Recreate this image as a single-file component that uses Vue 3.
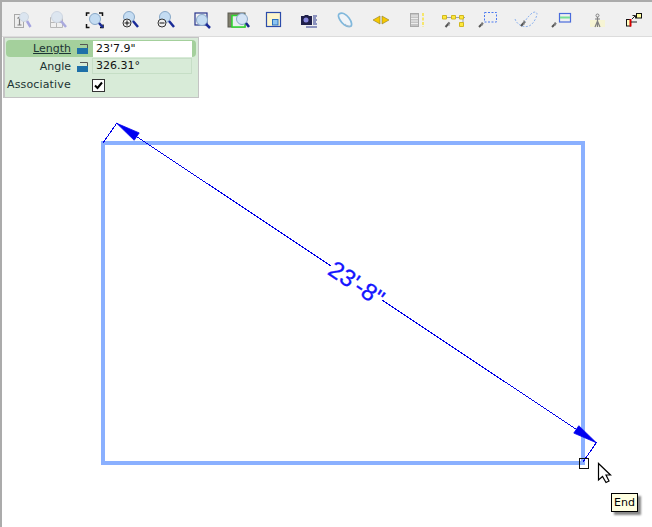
<script setup>
const slots = Array.from({ length: 18 }, (_, i) => i)
</script>

<template>
  <div class="window">
    <div class="toolbar">
      <div class="tool" v-for="i in slots" :key="i">
        <svg width="24" height="24" viewBox="0 0 24 24">
          <template v-if="i === 0">
            <rect x="4.500" y="7.500" width="9" height="13" fill="#eee" stroke="#a8a8a8" />
            <path d="M9.500 10v8M7.500 18h4M7.500 11.500l2-1.500" fill="none" stroke="#808080" stroke-width="1.200" />
            <circle cx="14" cy="10" r="4.500" fill="#dbe5f0" stroke="#cdd6e0" />
            <path d="M17 14l3.500 6" stroke="#a4a4e0" stroke-width="2.500" />
          </template>
          <template v-else-if="i === 1">
            <path d="M4.500 10.500v10h12v-10zM4.500 15.500h12M10.500 10.500v10" fill="none" stroke="#b8b8b8" />
            <circle cx="11" cy="10" r="5.500" fill="#dde6f0" stroke="#ced6e2" />
            <path d="M15 14l5 6" stroke="#aaaade" stroke-width="2.500" />
          </template>
          <template v-else-if="i === 2">
            <path d="M4.500 9v-3h3M17 6h3.500v3M4.500 17v3.500h3M21 17.500v3h-3" fill="none" stroke="#111" stroke-width="1.500" />
            <circle cx="13" cy="12" r="5.500" fill="#c4dcf2" stroke="#88a8c8" />
            <path d="M17 16l4 4.500" stroke="#1a2c98" stroke-width="2.500" />
          </template>
          <template v-else-if="i === 3 || i === 4">
            <circle cx="11" cy="10" r="5.500" fill="#c4dcf2" stroke="#88a8c8" />
            <path d="M15 14l5 6" stroke="#1a2c98" stroke-width="2.500" />
            <circle :cx="i === 3 ? 9 : 8" cy="16" r="4" fill="#eee" stroke="#333" />
            <path v-if="i === 3" d="M6.500 16h5M9 13.500v5" stroke="#111" />
            <path v-else d="M5.500 16h5" stroke="#111" />
          </template>
          <template v-else-if="i === 5">
            <rect x="5" y="6" width="12" height="12" fill="#f0f0f0" stroke="#26348c" stroke-width="1.200" />
            <circle cx="12" cy="13" r="5.500" fill="#c4dcf2" stroke="#88a8c8" />
            <path d="M16 17l4 4" stroke="#1a2c98" stroke-width="2.500" />
          </template>
          <template v-else-if="i === 6">
            <rect x="2" y="6" width="17" height="14" fill="#807e6c" stroke="#5a5a50" />
            <rect x="6" y="8.500" width="13" height="11.500" fill="#e8eef0" stroke="#2cd82c" stroke-width="1.500" />
            <circle cx="16" cy="12" r="5.500" fill="#d4e4f6" stroke="#8aa8c8" />
            <path d="M20 16l3 4" stroke="#14288c" stroke-width="2.500" />
          </template>
          <template v-else-if="i === 7">
            <rect x="4.500" y="5.500" width="14" height="14" fill="#fdf6cc" stroke="#2c4caa" stroke-width="1.200" />
            <rect x="10.500" y="12.500" width="5.500" height="5.500" fill="#8cc4f0" stroke="#2a70c0" />
          </template>
          <template v-else-if="i === 8">
            <path d="M3 9h3l1-1h3l1 1h3v9h-11z" fill="#20204a" />
            <circle cx="8" cy="13" r="2.500" fill="#8888dd" />
            <path d="M15 9h4M15 11h3M15 13h4M15 15h3M15 17h4M8 20h11" stroke="#28368c" />
          </template>
          <template v-else-if="i === 9">
            <path d="M5 7c3-2 7 0 10 4s3.500 8 1 8.500c-4 .5-8-3-10-6.500s-2-5 -1-6z" fill="#f0f4f8" stroke="#80b8dc" stroke-width="1.700" />
            <path d="M11 17c2 2 4 2.500 5.500 2" fill="none" stroke="#a8b8c8" />
          </template>
          <template v-else-if="i === 10">
            <path d="M10 9v8l-7-4zM12 9v8l7-4z" fill="#f6c800" stroke="#8c7c30" stroke-width=".6" />
          </template>
          <template v-else-if="i === 11">
            <rect x="4.500" y="6.500" width="8" height="13" fill="#c4c4c4" stroke="#a8a8a8" />
            <path d="M5 9h7M5 11.500h7M5 14h7M5 16.500h7" stroke="#ececec" />
            <path d="M17 6v14" stroke="#f6e66c" stroke-width="2" stroke-dasharray="3 1.500" />
          </template>
          <template v-else-if="i === 12">
            <path d="M3 10.500h20M21 10v7" stroke="#9aa0b8" />
            <path d="M.5 8.500h4v3.500h-4zM9.500 8.500h4v3.500h-4zM17.500 8.500h4v3.500h-4zM17.500 15.500h4v4h-4z" fill="#ffe83c" stroke="#d0b820" />
            <path d="M3.500 20l4-4.500" stroke="#555" stroke-width="2" />
            <path d="M7 15v4" stroke="#999" />
          </template>
          <template v-else-if="i === 13">
            <rect x="6.500" y="5.500" width="12" height="9.500" fill="none" stroke="#4a78f0" stroke-dasharray="2 1.500" />
            <path d="M1 20l4-4" stroke="#555" stroke-width="2" />
            <path d="M4 15v4" stroke="#999" />
          </template>
          <template v-else-if="i === 14">
            <path d="M1 12c2 6 9 9 14 7s8-10 8-12-3-3-6 0-5 5-6 8" fill="none" stroke="#8ab0ee" stroke-dasharray="2 1.500" />
            <path d="M7 19l4-4.500" stroke="#555" stroke-width="2" />
            <path d="M10 13v5" stroke="#999" />
          </template>
          <template v-else-if="i === 15">
            <rect x="9.500" y="6.500" width="11" height="8.500" fill="none" stroke="#4a6cdc" stroke-width="1.200" />
            <path d="M10 10.500h10" stroke="#78e098" stroke-width="2" />
            <path d="M2 20l4-4" stroke="#555" stroke-width="2" />
            <path d="M5 15v4" stroke="#999" />
          </template>
          <template v-else-if="i === 16">
            <rect x="4" y="13" width="15" height="7" fill="#f6f4d4" />
            <path d="M11.500 10v10M9 12h5M9 20l2.500-6 2.500 6" fill="none" stroke="#808080" stroke-width="1.200" />
            <circle cx="11.500" cy="8.500" r="1.500" fill="none" stroke="#808080" />
          </template>
          <template v-else>
            <rect x="4.500" y="12.500" width="4" height="6.500" fill="#ffffc0" stroke="#111" />
            <path d="M8.500 12v7.500" stroke="#d80000" stroke-width="2" />
            <rect x="14.500" y="6.500" width="5" height="4.500" fill="#ffffa0" stroke="#111" />
            <path d="M10 12l3-3M10.500 8.500h3v3M9 15h6" fill="none" stroke="#222" />
          </template>
        </svg>
      </div>
    </div>

    <div class="canvas">
      <svg class="drawing" width="650" height="490" viewBox="2 37 650 490">
        <rect x="103" y="143" width="480" height="320" fill="none" stroke="#8ab0ff" stroke-width="4" />
        <g class="dim" shape-rendering="crispEdges" stroke="#0000e6" fill="none">
          <path d="M103 143L116.700 123.300L331 266" />
          <path d="M382 300L596.300 442.700L583 462" />
        </g>
        <path class="head" d="M116.700 123.300L139.200 132.900L134.200 140.300Z" />
        <path class="head" d="M596.300 442.700L578.800 425.700L573.800 433.100Z" />
        <text class="dim-label" x="0" y="0" text-anchor="middle" transform="translate(357 283) rotate(33.700) translate(0 9)">23'-8"</text>
        <rect x="579" y="458" width="9" height="10" fill="none" stroke="#111" shape-rendering="crispEdges" />
        <path d="M598.500 463.500V480L602.500 476.500L606 482.500L609 481L606 475H610.500Z" fill="#fff" stroke="#000" stroke-width="1.200" />
      </svg>

      <form class="panel" @submit.prevent>
        <div class="row active">
          <label class="name"><u>Length</u></label>
          <svg class="lock" width="11" height="11" viewBox="0 0 11 11"><path d="M3 1.500h7.500v4" fill="none" stroke="#555" /><rect x="0" y="5" width="11" height="6" fill="#1e70a8" /></svg>
          <input class="field" value="23'7.9&quot;" />
        </div>
        <div class="row second">
          <label class="name">Angle</label>
          <svg class="lock narrow" width="11" height="11" viewBox="0 0 11 11"><path d="M3 1.500h7.500v4" fill="none" stroke="#555" /><rect x="0" y="5" width="11" height="6" fill="#1e70a8" /></svg>
          <div class="readout">326.31°</div>
        </div>
        <div class="row third">
          <label class="name assoc">Associative</label>
          <span class="check">
            <svg width="11" height="11" viewBox="0 0 11 11"><path d="M2 5.500L4.500 8L9 2.500" fill="none" stroke="#000" stroke-width="2" /></svg>
          </span>
        </div>
      </form>

      <div class="tooltip">End</div>
    </div>
  </div>
</template>

<style scoped>
.window {
  width: 652px;
  height: 527px;
  box-sizing: border-box;
  border-top: 2px solid #ababab;
  border-left: 2px solid #ababab;
  background: #fff;
  font-family: "DejaVu Sans", sans-serif;
  font-size: 11px;
  display: flex;
  flex-direction: column;
  overflow: hidden;
}
.toolbar {
  height: 35px;
  flex: none;
  box-sizing: border-box;
  padding-left: 2px;
  background: #f0f0f0;
  border-bottom: 1px solid #dcdcdc;
  display: flex;
  align-items: center;
}
.tool {
  width: 36px;
  flex: none;
  display: flex;
  justify-content: center;
}
.tool svg {
  overflow: visible;
}
.canvas {
  position: relative;
  flex: 1;
}
.drawing {
  display: block;
}
.head {
  fill: #0000f0;
  stroke: #0000f0;
  stroke-width: 0.8;
}
.dim-label {
  font: 24px "Liberation Sans", sans-serif;
  fill: #1414ff;
  stroke: #1414ff;
  stroke-width: 0.3;
}
.panel {
  position: absolute;
  left: 1px;
  top: 0;
  width: 196px;
  height: 61px;
  box-sizing: border-box;
  padding: 2px 2px 0 1px;
  background: #d8ebd8;
  border: 1px solid #c4c4c4;
  border-left-width: 2px;
  display: flex;
  flex-direction: column;
}
.row {
  display: flex;
  align-items: center;
  color: #1c3434;
}
.active {
  height: 17px;
  background: #a4d09c;
  border-radius: 4px;
}
.second {
  height: 16px;
  margin-top: 1px;
}
.third {
  height: 16px;
  margin-top: 2px;
}
.name {
  width: 65px;
  text-align: right;
  flex: none;
}
.assoc {
  box-sizing: border-box;
  padding-left: 1px;
  text-align: left;
  white-space: nowrap;
  letter-spacing: 0.15px;
}
.lock {
  flex: none;
  margin-left: 6px;
  margin-right: 5px;
}
.narrow {
  margin-right: 4px;
}
.field {
  width: 99px;
  height: 16px;
  box-sizing: border-box;
  border: 0;
  padding: 0 3px;
  margin: 0;
  background: #fff;
  font: 11px "DejaVu Sans", sans-serif;
  color: #111;
  outline: none;
}
.readout {
  width: 100px;
  height: 16px;
  box-sizing: border-box;
  padding: 0 3px;
  line-height: 14px;
  border: 1px solid #c6dec6;
  color: #111;
}
.check {
  width: 13px;
  height: 13px;
  box-sizing: border-box;
  margin-left: 21px;
  align-self: flex-end;
  border: 1px solid #333;
  background: #fff;
  display: flex;
  align-items: center;
  justify-content: center;
}
.tooltip {
  position: absolute;
  left: 609px;
  top: 456px;
  width: 27px;
  height: 19px;
  box-sizing: border-box;
  border: 1px solid #000;
  background: #ffffe1;
  color: #000;
  line-height: 17px;
  text-align: center;
  box-shadow: 3px 3px 2px #888;
}
</style>
